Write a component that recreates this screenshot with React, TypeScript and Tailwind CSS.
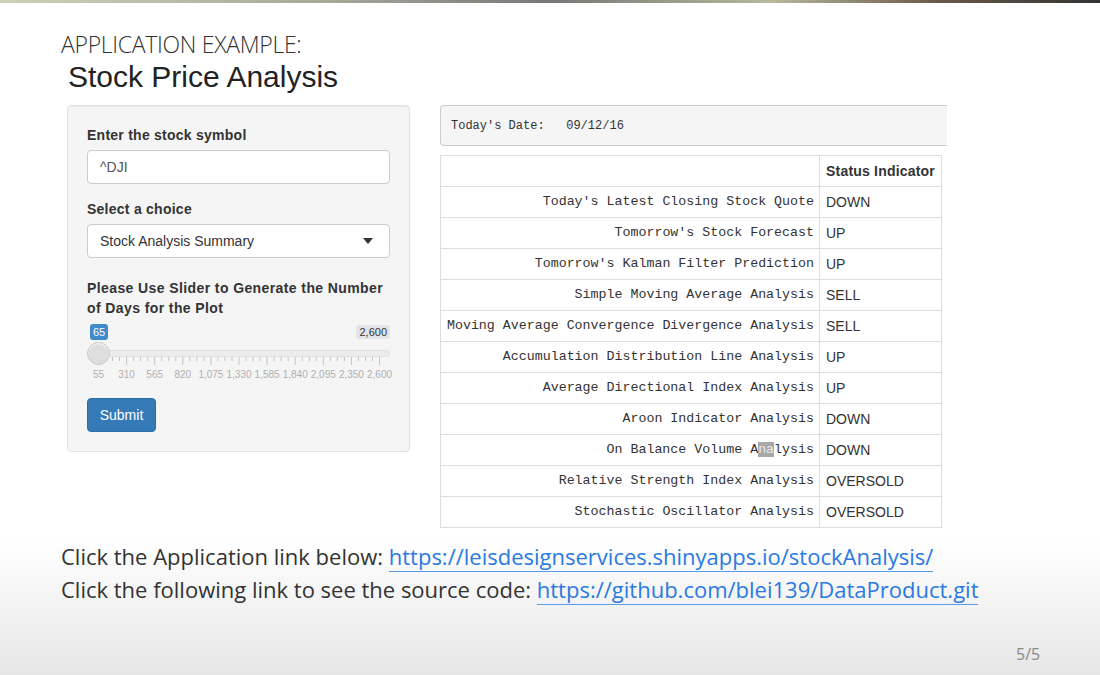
import React from "react";

const rows: [string, string][] = [
  ["Today's Latest Closing Stock Quote", "DOWN"],
  ["Tomorrow's Stock Forecast", "UP"],
  ["Tomorrow's Kalman Filter Prediction", "UP"],
  ["Simple Moving Average Analysis", "SELL"],
  ["Moving Average Convergence Divergence Analysis", "SELL"],
  ["Accumulation Distribution Line Analysis", "UP"],
  ["Average Directional Index Analysis", "UP"],
  ["Aroon Indicator Analysis", "DOWN"],
  ["On Balance Volume Analysis", "DOWN"],
  ["Relative Strength Index Analysis", "OVERSOLD"],
  ["Stochastic Oscillator Analysis", "OVERSOLD"],
];

const gridLabels = ["55", "310", "565", "820", "1,075", "1,330", "1,585", "1,840", "2,095", "2,350", "2,600"];

const Slider: React.FC = () => {
  // 10 intervals, 3 minor ticks in each
  const ticks: { x: number; major: boolean }[] = [];
  for (let i = 0; i <= 40; i++) {
    ticks.push({ x: 11.5 + (i * 281) / 40, major: i % 4 === 0 });
  }
  return (
    <div className="relative w-[303px] h-[60px] mt-[6px]">
      <span className="absolute left-[3px] top-0 px-[3px] h-[16px] leading-[16px] rounded-[3px] bg-[#428bca] text-white text-[11px]">
        65
      </span>
      <span className="absolute right-0 top-[1px] px-[3px] h-[14px] leading-[14px] rounded-[3px] bg-[#e1e4e9] text-[#333] text-[11px]">
        2,600
      </span>
      <div className="absolute left-[1px] right-0 top-[26px] h-[7px] rounded-full bg-[#ececec] border border-[#e0e0e0]" />
      <svg className="absolute left-0 top-[33px]" width="303" height="10" viewBox="0 0 303 10">
        {ticks.map((t, i) => (
          <line key={i} x1={t.x} x2={t.x} y1={0} y2={t.major ? 8 : 4} stroke="#c4c4c4" strokeWidth="1" />
        ))}
      </svg>
      <div className="absolute left-0 top-[18px] w-[23px] h-[23px] rounded-full bg-[#dedede] border border-[#c8c8c8] shadow-[inset_0_1px_1px_#fff]" />
      {gridLabels.map((l, i) => (
        <span
          key={l}
          className="absolute top-[46px] text-[10px] leading-[10px] text-[#b0b0b0] -translate-x-1/2"
          style={{ left: 11.5 + i * 28.1 }}
        >
          {l}
        </span>
      ))}
    </div>
  );
};

const App: React.FC = () => {
  return (
    <div className="relative w-[1100px] h-[675px] overflow-hidden bg-[linear-gradient(to_bottom,#ffffff_0%,#ffffff_80%,#e6e6e6_100%)]">
      <div className="h-[3px] bg-[linear-gradient(to_right,#cfcfb8,#a8a89a_30%,#777_50%,#b8b89a_70%,#6b5a4a_85%,#333)]" />

      <div className="pl-[61px] pt-[27px]">
        <div className="font-[family-name:'Open_Sans',sans-serif] font-light text-[23px] leading-[28px] text-[#333] tracking-[-0.3px]">
          APPLICATION EXAMPLE:
        </div>
        <div className="pl-[7px] mt-[2px] font-[family-name:'Liberation_Sans',Arial,sans-serif] text-[30px] leading-[34px] text-[#222]">
          Stock Price Analysis
        </div>

        <div className="flex items-start gap-[30px] mt-[11px] pl-[6px] font-[family-name:'Liberation_Sans',Arial,sans-serif] text-[14px] text-[#333]">
          {/* sidebar */}
          <div className="w-[343px] h-[347px] bg-[#f5f5f5] border border-[#e3e3e3] rounded-[4px] px-[19px] pt-[19px] shadow-[inset_0_1px_1px_rgba(0,0,0,0.05)]">
            <div className="font-bold leading-[20px] tracking-[0.25px]">Enter the stock symbol</div>
            <div className="mt-[5px] h-[34px] bg-white border border-[#ccc] rounded-[4px] px-[12px] flex items-center text-[#555]">
              ^DJI
            </div>
            <div className="mt-[15px] font-bold leading-[20px] tracking-[0.25px]">Select a choice</div>
            <div className="mt-[5px] h-[34px] bg-white border border-[#ccc] rounded-[4px] px-[12px] flex items-center justify-between text-[#333]">
              <span>Stock Analysis Summary</span>
              <svg width="10" height="6" viewBox="0 0 10 6" className="mr-[4px]">
                <path d="M0 0H10L5 6Z" fill="#333" />
              </svg>
            </div>
            <div className="mt-[20px] font-bold leading-[20px] tracking-[0.4px]">
              Please Use Slider to Generate the Number of Days for the Plot
            </div>
            <Slider />
            <div className="mt-[14px] w-[69px] h-[34px] bg-[#337ab7] border border-[#2e6da4] rounded-[4px] text-white flex items-center justify-center">
              Submit
            </div>
          </div>

          {/* main */}
          <div className="flex flex-col">
            <div className="w-[507px] h-[41px] bg-[#f5f5f5] border border-r-0 border-[#ccc] rounded-l-[4px] px-[10px] flex items-center font-[family-name:'Liberation_Mono','Courier_New',monospace] text-[12px] text-[#333] whitespace-pre">
              {"Today's Date:   09/12/16"}
            </div>
            <table className="mt-[9px] w-[501px] table-fixed border-collapse">
              <colgroup>
                <col className="w-[379px]" />
                <col className="w-[122px]" />
              </colgroup>
              <thead>
                <tr className="h-[31px]">
                  <th className="border border-[#ddd]" />
                  <th className="border border-[#ddd] text-left pl-[6px] pr-0 font-bold tracking-[0.2px] whitespace-nowrap">
                    Status Indicator
                  </th>
                </tr>
              </thead>
              <tbody>
                {rows.map(([name, status]) => (
                  <tr key={name} className="h-[31px]">
                    <td className="border border-[#ddd] text-right pr-[5px] font-[family-name:'Liberation_Mono','Courier_New',monospace] text-[13.3px] text-[#333] whitespace-pre">
                      {name === "On Balance Volume Analysis" ? (
                        <>
                          On Balance Volume A<span className="bg-[#a8a8a8] text-[#e8e8e8]">na</span>lysis
                        </>
                      ) : (
                        name
                      )}
                    </td>
                    <td className="border border-[#ddd] px-[6px] text-[#333]">{status}</td>
                  </tr>
                ))}
              </tbody>
            </table>
          </div>
        </div>

        <div className="mt-[12px] font-[family-name:'Open_Sans',sans-serif] text-[22px] leading-[33px] text-[#333]">
          <div>
            Click the Application link below:{" "}
            <a className="text-[#2a7ae2] border-b border-[#5b9bea]">https://leisdesignservices.shinyapps.io/stockAnalysis/</a>
          </div>
          <div>
            Click the following link to see the source code:{" "}
            <a className="text-[#2a7ae2] border-b border-[#5b9bea]">https://github.com/blei139/DataProduct.git</a>
          </div>
        </div>
      </div>

      <div className="absolute left-[1016px] top-[642px] font-[family-name:'Open_Sans',sans-serif] text-[16px] text-[#888]">5/5</div>
    </div>
  );
};

export default App;
